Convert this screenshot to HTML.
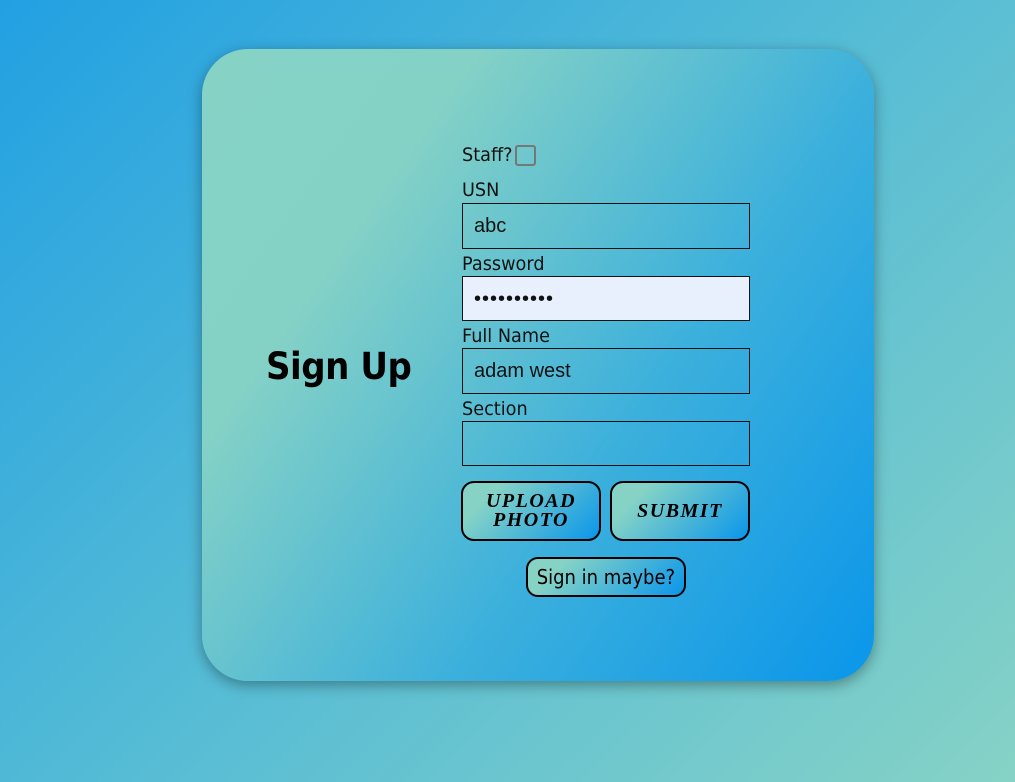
<!DOCTYPE html>
<html><head><meta charset="utf-8"><style>
*{box-sizing:border-box;margin:0;padding:0}
html,body{width:1015px;height:782px;overflow:hidden}
body{background:linear-gradient(135deg,#22a0e2 0%,#56bcd5 50%,#86d2c6 100%);font-family:"Liberation Sans","DejaVu Sans",sans-serif;position:relative}
.card{position:absolute;left:202px;top:49px;width:672px;height:632px;border-radius:46px;background:linear-gradient(125deg,#86d3c6 0%,#84d1c6 25%,#3cb0dc 62%,#0a96ea 100%);box-shadow:0 4px 14px rgba(0,0,0,.35)}
h1{position:absolute;left:266px;top:345px;font:bold 37px "DejaVu Sans",sans-serif;letter-spacing:-0.5px;color:#000;transform:scaleX(.92);transform-origin:left}
.lbl{position:absolute;left:462px;font-size:19px;color:#111;font-family:"DejaVu Sans",sans-serif;transform:scaleX(.93);transform-origin:left}
.inp{position:absolute;left:462px;width:288px;height:46px;border:1px solid #111;font-size:20px;padding-left:11px;line-height:44px;color:#111}
.btn{position:absolute;border:2px solid #000;border-radius:13px;background:linear-gradient(135deg,#86d3c6 20%,#0a96ea 100%);font:italic bold 20px "Liberation Serif",serif;letter-spacing:1.5px;text-align:center;color:#000;display:flex;align-items:center;justify-content:center;line-height:19px}
.cb{position:absolute;left:515px;top:145px;width:21px;height:21px;border:2px solid #777;border-radius:3px}
</style></head><body>
<div class="card"></div>
<h1>Sign Up</h1>
<div class="lbl" style="top:144px">Staff?</div>
<div class="cb"></div>
<div class="lbl" style="top:179px">USN</div>
<div class="inp" style="top:203px">abc</div>
<div class="lbl" style="top:253px">Password</div>
<div class="inp" style="top:276px;height:45px;background:#e8f0fe;letter-spacing:1px">••••••••••</div>
<div class="lbl" style="top:325px">Full Name</div>
<div class="inp" style="top:348px">adam west</div>
<div class="lbl" style="top:398px">Section</div>
<div class="inp" style="top:421px;height:45px"></div>
<div class="btn" style="left:461px;top:481px;width:140px;height:60px">UPLOAD<br>PHOTO</div>
<div class="btn" style="left:610px;top:481px;width:140px;height:60px">SUBMIT</div>
<div class="btn" style="left:526px;top:557px;width:160px;height:40px;font:20px 'DejaVu Sans',sans-serif;letter-spacing:0;border-radius:12px"><span style="display:inline-block;transform:scaleX(.9)">Sign in maybe?</span></div>
</body></html>
